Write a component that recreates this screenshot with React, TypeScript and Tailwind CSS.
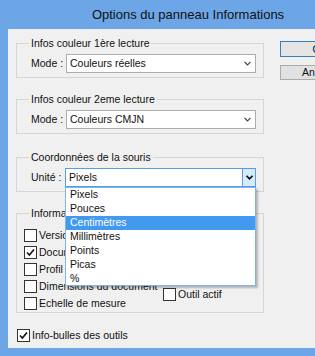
import React from "react"

const units = ["Pixels", "Pouces", "Centimètres", "Millimètres", "Points", "Picas", "%"]

function Check({ checked }: { checked?: boolean }) {
  return (
    <span className="w-[13px] h-[13px] shrink-0 border border-[#333333] bg-white flex items-center justify-center">
      {checked && (
        <svg width="9" height="9" viewBox="0 0 9 9">
          <path d="M1 4.5 L3.4 7 L8 1.5" fill="none" stroke="#111" strokeWidth="1.6" />
        </svg>
      )}
    </span>
  )
}

function Chevron({ bold }: { bold?: boolean }) {
  return (
    <svg width="7" height="5" viewBox="0 0 7 5">
      <path d="M0.5 0.8 L3.5 3.8 L6.5 0.8" fill="none" stroke={bold ? "#111" : "#444"} strokeWidth={bold ? 1.8 : 1.2} />
    </svg>
  )
}

function Group({ title, children, className }: { title: string; children: React.ReactNode; className?: string }) {
  return (
    <fieldset className={"border border-[#d5d5d5] pl-[7px] pr-[7px] m-0 min-w-0 " + (className ?? "")}>
      <legend className="ml-[5px] px-[2px] leading-[14px]">{title}</legend>
      {children}
    </fieldset>
  )
}

function Select({ value }: { value: string }) {
  return (
    <div className="w-[190px] h-[19px] border border-[#acacac] bg-white flex items-center justify-between pl-[3px] pr-[4px]">
      <span>{value}</span>
      <Chevron />
    </div>
  )
}

export default function App() {
  return (
    <div className="w-[315px] h-[356px] overflow-hidden bg-[#6ca6e6] text-[10.5px] text-[#111] font-['Liberation_Sans',Arial,sans-serif]">
      <div className="w-[376px] flex flex-col">
        <div className="h-[29px] flex items-center justify-center text-[13px] text-[#111]">
          Options du panneau Informations
        </div>
        <div className="ml-[8px] w-[360px] h-[319px] bg-[#f0f0f0] flex">
          <div className="w-[256px] shrink-0 pl-[8px] pt-[7px] flex flex-col">
            <Group title="Infos couleur 1ère lecture" className="pt-[4px] pb-[4px]">
              <div className="flex items-center pl-[7px]">
                <span className="w-[35px]">Mode :</span>
                <Select value="Couleurs réelles" />
              </div>
            </Group>

            <Group title="Infos couleur 2eme lecture" className="mt-[14px] pt-[4px] pb-[4px]">
              <div className="flex items-center pl-[7px]">
                <span className="w-[35px]">Mode :</span>
                <Select value="Couleurs CMJN" />
              </div>
            </Group>

            <Group title="Coordonnées de la souris" className="mt-[16px] pt-[4px] pb-[4px]">
              <div className="flex items-center pl-[7px]">
                <span className="w-[35px]">Unité :</span>
                <div className="relative z-10">
                  <div className="w-[191px] h-[19px] border border-[#569de5] bg-white flex items-stretch">
                    <span className="flex-1 pl-[3px] flex items-center">Pixels</span>
                    <span className="w-[13px] bg-[#d7eafc] border-l border-[#569de5] flex items-center justify-center">
                      <Chevron bold />
                    </span>
                  </div>
                  <div className="absolute top-full left-0 w-[191px] h-[99px] border border-[#7eb4ea] bg-white shadow-[2px_2px_2px_rgba(0,0,0,0.25)] flex flex-col">
                    {units.map((u) => (
                      <div
                        key={u}
                        className={
                          "h-[14px] pl-[4px] flex items-center " +
                          (u === "Centimètres" ? "bg-[#4299f0] text-white" : "")
                        }
                      >
                        {u}
                      </div>
                    ))}
                  </div>
                </div>
              </div>
            </Group>

            <Group title="Informations d'état" className="mt-[14px] pt-[7px] pb-0">
              <div className="flex">
                <div className="w-[139px] shrink-0 flex flex-col">
                  {[
                    ["Version Cue", false],
                    ["Document : tailles", true],
                    ["Profil du document", false],
                    ["Dimensions du document", false],
                    ["Echelle de mesure", false],
                  ].map(([label, c]) => (
                    <div key={label as string} className="h-[17px] flex items-center gap-[2px] whitespace-nowrap">
                      <Check checked={c as boolean} />
                      <span>{label}</span>
                    </div>
                  ))}
                </div>
                <div className="shrink-0 flex flex-col pt-[8px]">
                  {["Efficacité", "Minutage", "Travail", "Outil actif"].map((label) => (
                    <div key={label} className="h-[17px] flex items-center gap-[2px] whitespace-nowrap">
                      <Check />
                      <span>{label}</span>
                    </div>
                  ))}
                </div>
              </div>
            </Group>

            <div className="mt-[14px] h-[17px] pl-[1px] flex items-center gap-[2px]">
              <Check checked />
              <span>Info-bulles des outils</span>
            </div>
          </div>

          <div className="ml-[16px] pt-[12px] flex flex-col gap-[8px]">
            <button className="w-[80px] h-[16px] border border-[#3c7fb1] bg-[#e5e5e5] flex items-center justify-center leading-none">
              OK
            </button>
            <button className="w-[80px] h-[15px] border border-[#acacac] bg-[#e1e1e1] flex items-center justify-center leading-none">
              Annuler
            </button>
          </div>
        </div>
      </div>
    </div>
  )
}
